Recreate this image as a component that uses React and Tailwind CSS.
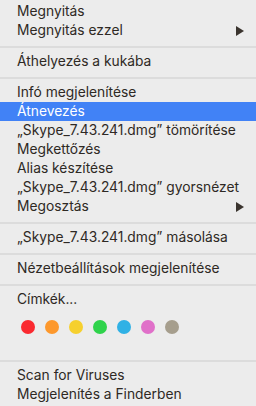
import React from "react";

const SECTIONS = [
  [{ label: "Megnyitás" }, { label: "Megnyitás ezzel", sub: true }],
  [{ label: "Áthelyezés a kukába" }],
  [
    { label: "Infó megjelenítése" },
    { label: "Átnevezés", active: true },
    { label: "„Skype_7.43.241.dmg” tömörítése" },
    { label: "Megkettőzés" },
    { label: "Alias készítése" },
    { label: "„Skype_7.43.241.dmg” gyorsnézet" },
    { label: "Megosztás", sub: true },
  ],
  [{ label: "„Skype_7.43.241.dmg” másolása" }],
  [{ label: "Nézetbeállítások megjelenítése" }],
];

const TAGS = ["#fa2a30", "#fd982c", "#f6d02e", "#2fd34b", "#30b1e5", "#e070c9", "#a69e8d"];

function Arrow() {
  return (
    <svg width="8" height="10" viewBox="0 0 8 10" className="mr-[12px]">
      <path d="M0 0 L8 5 L0 10 Z" fill="#3a342e" />
    </svg>
  );
}

function Row({ item }) {
  return (
    <div
      className={`h-[19px] flex items-center justify-between pl-[17px] ${
        item.active ? "bg-[#4182f6] text-white" : "text-[#2e2924]"
      }`}
    >
      <span>{item.label}</span>
      {item.sub && <Arrow />}
    </div>
  );
}

function Separator() {
  return (
    <div className="h-[12px] pt-[6px]">
      <div className="h-[2px] bg-[#dcdcdc]" />
    </div>
  );
}

export default function App() {
  return (
    <div
      className="w-[256px] h-[406px] bg-[#ececec] pt-[2px] text-[13.8px] leading-[19px] overflow-hidden"
      style={{ fontFamily: "Inter, 'Liberation Sans', sans-serif" }}
    >
      {SECTIONS.map((sec, i) => (
        <div key={i}>
          {sec.map((item) => (
            <Row key={item.label} item={item} />
          ))}
          <Separator />
        </div>
      ))}
      <Row item={{ label: "Címkék..." }} />
      <div className="h-[45px] pt-[11px] pl-[21px] flex gap-[10px]">
        {TAGS.map((c) => (
          <div key={c} className="w-[14px] h-[14px] rounded-full" style={{ backgroundColor: c }} />
        ))}
      </div>
      <Separator />
      <Row item={{ label: "Scan for Viruses" }} />
      <Row item={{ label: "Megjelenítés a Finderben" }} />
    </div>
  );
}
